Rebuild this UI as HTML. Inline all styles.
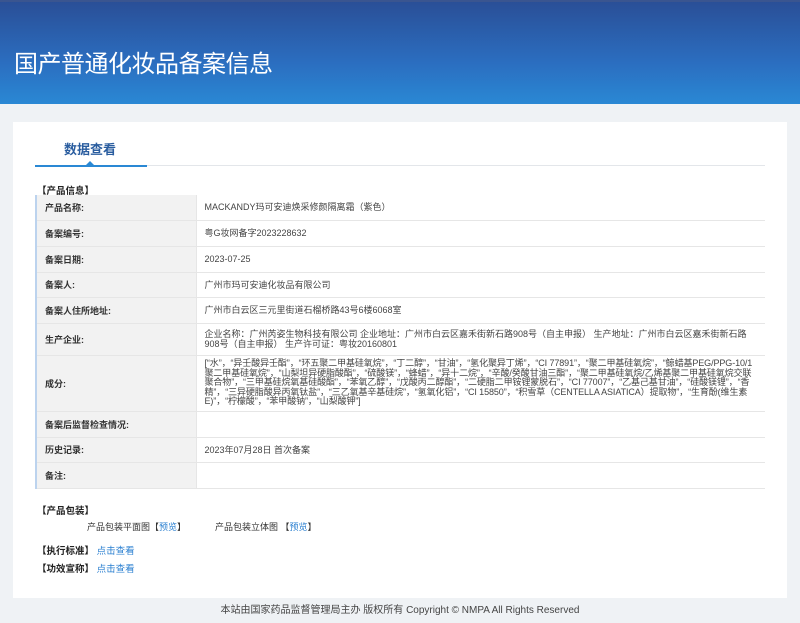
<!DOCTYPE html>
<html><head><meta charset="utf-8"><style>
*{margin:0;padding:0;box-sizing:border-box}
body{width:800px;height:623px;background:#eff2f5;font-family:"Liberation Sans","Noto Sans CJK SC",sans-serif;position:relative;overflow:hidden;color:#333}
.hd{position:absolute;left:0;top:0;width:800px;height:104px;background:linear-gradient(180deg,#2a4f97 0%,#2b6ec0 60%,#2a88d4 100%);border-top:2px solid #3a5590}
.hd h1{position:absolute;left:14px;top:42px;font-size:24px;font-weight:normal;color:#fff;letter-spacing:-0.5px}
.card{position:absolute;left:13px;top:122px;width:774px;height:476px;background:#fff}
.tab{position:absolute;left:64px;top:139px;font-size:13px;font-weight:bold;color:#2a5d9f}
.line{position:absolute;left:35px;top:165px;width:730px;height:1px;background:#e3e6ea}
.uline{position:absolute;left:35px;top:165px;width:112px;height:2px;background:#2a88d4}
.tri{position:absolute;left:86px;top:161px;width:0;height:0;border-left:4px solid transparent;border-right:4px solid transparent;border-bottom:4px solid #2a88d4}
.sec{position:absolute;font-size:9.5px;font-weight:bold;color:#222}
table{position:absolute;left:35px;top:195px;width:730px;border-collapse:collapse;font-size:9px;border-left:2px solid #bcd3ee;table-layout:fixed}
td{border-bottom:1px solid #e6e6e6;padding:0 8px;vertical-align:middle}
td.l{width:160px;background:#f2f2f2;font-weight:bold;color:#333;padding-left:8px;border-right:1px solid #e6e6e6}
td.v{color:#444;line-height:10px}
.a{color:#2a7fd0}
.ft{position:absolute;top:601px;left:0;width:800px;text-align:center;font-size:10px;color:#444}
</style></head><body>
<div class="hd"><h1>国产普通化妆品备案信息</h1></div>
<div class="card"></div>
<div class="tab">数据查看</div>
<div class="line"></div><div class="uline"></div><div class="tri"></div>
<div class="sec" style="left:37px;top:183px">【产品信息】</div>
<table>
<tr style="height:25px"><td class="l">产品名称:</td><td class="v">MACKANDY玛可安迪焕采修颜隔离霜（紫色）</td></tr>
<tr style="height:26px"><td class="l">备案编号:</td><td class="v">粤G妆网备字2023228632</td></tr>
<tr style="height:26px"><td class="l">备案日期:</td><td class="v">2023-07-25</td></tr>
<tr style="height:25px"><td class="l">备案人:</td><td class="v">广州市玛可安迪化妆品有限公司</td></tr>
<tr style="height:26px"><td class="l">备案人住所地址:</td><td class="v">广州市白云区三元里街道石榴桥路43号6楼6068室</td></tr>
<tr style="height:32px"><td class="l">生产企业:</td><td class="v">企业名称：广州芮姿生物科技有限公司 企业地址：广州市白云区嘉禾街新石路908号（自主申报） 生产地址：广州市白云区嘉禾街新石路908号（自主申报） 生产许可证：粤妆20160801</td></tr>
<tr style="height:56px"><td class="l">成分:</td><td class="v" style="font-size:9px;line-height:9.5px;letter-spacing:-0.1px">[“水”，“异壬酸异壬酯”，“环五聚二甲基硅氧烷”，“丁二醇”，“甘油”，“氢化聚异丁烯”，“CI 77891”，“聚二甲基硅氧烷”，“鲸蜡基PEG/PPG-10/1 聚二甲基硅氧烷”，“山梨坦异硬脂酸酯”，“硫酸镁”，“蜂蜡”，“异十二烷”，“辛酸/癸酸甘油三酯”，“聚二甲基硅氧烷/乙烯基聚二甲基硅氧烷交联聚合物”，“三甲基硅烷氧基硅酸酯”，“苯氧乙醇”，“戊酸丙二醇酯”，“二硬脂二甲铵锂蒙脱石”，“CI 77007”，“乙基己基甘油”，“硅酸镁锂”，“香精”，“三异硬脂酸异丙氧钛盐”，“三乙氧基辛基硅烷”，“氢氧化铝”，“CI 15850”，“积雪草（CENTELLA ASIATICA）提取物”，“生育酚(维生素E)”，“柠檬酸”，“苯甲酸钠”，“山梨酸钾”]</td></tr>
<tr style="height:26px"><td class="l">备案后监督检查情况:</td><td class="v"></td></tr>
<tr style="height:25px"><td class="l">历史记录:</td><td class="v">2023年07月28日 首次备案</td></tr>
<tr style="height:26px"><td class="l">备注:</td><td class="v"></td></tr>
</table>
<div class="sec" style="left:37px;top:503px">【产品包装】</div>
<div style="position:absolute;left:87px;top:520px;font-size:9px">产品包装平面图【<span class="a">预览</span>】</div>
<div style="position:absolute;left:215px;top:520px;font-size:9px">产品包装立体图 【<span class="a">预览</span>】</div>
<div class="sec" style="left:37px;top:543px">【执行标准】 <span class="a" style="font-weight:normal">点击查看</span></div>
<div class="sec" style="left:37px;top:561px">【功效宣称】 <span class="a" style="font-weight:normal">点击查看</span></div>
<div class="ft">本站由国家药品监督管理局主办 版权所有 Copyright © NMPA All Rights Reserved</div>
</body></html>
